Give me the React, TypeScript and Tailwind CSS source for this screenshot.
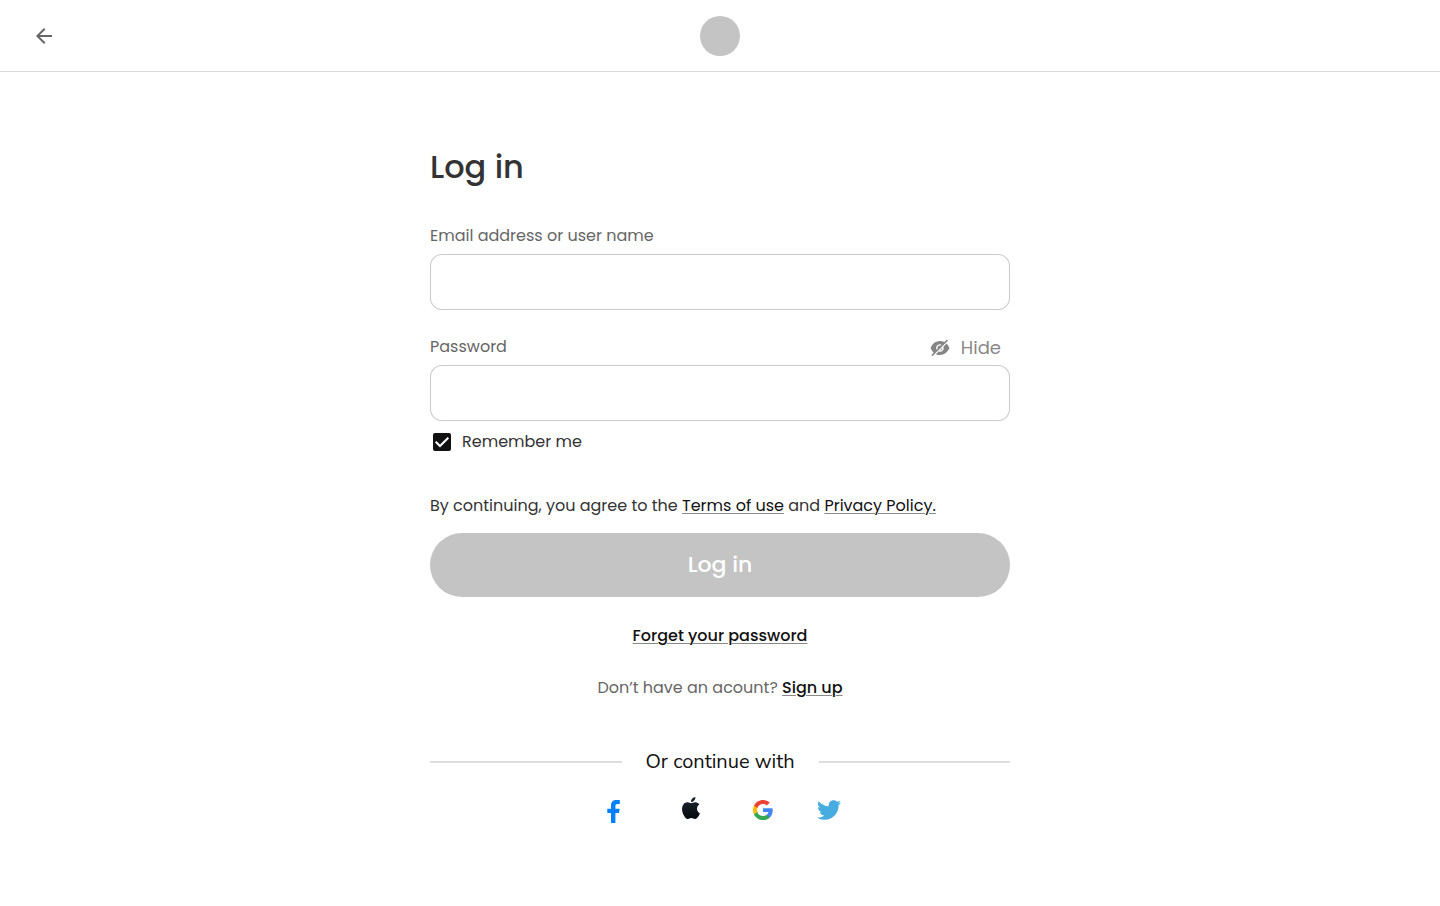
import { useState } from "react";
import { AiFillEyeInvisible } from "react-icons/ai";
import { FaTwitter } from "react-icons/fa";
import { MdArrowBack } from "react-icons/md";

const inputStyle =
  "h-14 w-full rounded-xl border border-[#666666]/35 bg-white px-4 text-[#333333] outline-none focus:border-[#111111]";
const linkStyle =
  "text-[#111111] underline decoration-[#8a8a8a] decoration-1 underline-offset-2";

const FacebookIcon = () => (
  <svg width="13" height="23" viewBox="0 0 13 23" fill="#0080FF">
    <path d="M4 23V13H0.3V8.8H4V5.6C4 2 5.9 0 9.6 0H12.8V4.1H10.5C9 4.1 8.4 4.8 8.4 6.1V8.8H12.7L12 13H8.4V23Z" />
  </svg>
);

const AppleIcon = () => (
  <svg width="22" height="22" viewBox="0 0 24 24">
    <defs>
      <linearGradient id="apple" x1="0" y1="0" x2="0" y2="1">
        <stop offset="0" stopColor="#1c2733" />
        <stop offset="1" stopColor="#080a0d" />
      </linearGradient>
    </defs>
    <path
      fill="url(#apple)"
      d="M12.152 6.896c-.948 0-2.415-1.078-3.96-1.04-2.04.027-3.91 1.183-4.961 3.014-2.117 3.675-.546 9.103 1.519 12.09 1.013 1.454 2.208 3.09 3.792 3.039 1.52-.065 2.09-.987 3.935-.987 1.831 0 2.35.987 3.96.948 1.637-.026 2.676-1.48 3.676-2.948 1.156-1.688 1.636-3.325 1.662-3.415-.039-.013-3.182-1.221-3.22-4.857-.026-3.04 2.48-4.494 2.597-4.559-1.429-2.09-3.623-2.324-4.39-2.376-2-.156-3.675 1.09-4.61 1.09zM15.53 3.83c.843-1.012 1.4-2.427 1.245-3.83-1.207.052-2.662.805-3.532 1.818-.78.896-1.454 2.338-1.273 3.714 1.338.104 2.715-.688 3.559-1.701"
    />
  </svg>
);

const GoogleIcon = () => (
  <svg width="22" height="22" viewBox="0 0 24 24">
    <path
      fill="#4285F4"
      d="M22.56 12.25c0-.78-.07-1.53-.2-2.25H12v4.26h5.92c-.26 1.37-1.04 2.53-2.21 3.31v2.77h3.57c2.08-1.92 3.28-4.74 3.28-8.09z"
    />
    <path
      fill="#34A853"
      d="M12 23c2.97 0 5.46-.98 7.28-2.66l-3.57-2.77c-.98.66-2.23 1.06-3.71 1.06-2.86 0-5.29-1.93-6.16-4.53H2.18v2.84C3.99 20.53 7.7 23 12 23z"
    />
    <path
      fill="#FBBC05"
      d="M5.84 14.09c-.22-.66-.35-1.36-.35-2.09s.13-1.43.35-2.09V7.07H2.18C1.43 8.55 1 10.22 1 12s.43 3.45 1.18 4.93l3.66-2.84z"
    />
    <path
      fill="#EA4335"
      d="M12 5.38c1.62 0 3.06.56 4.21 1.64l3.15-3.15C17.45 2.09 14.97 1 12 1 7.7 1 3.99 3.47 2.18 7.07l3.66 2.84c.87-2.6 3.3-4.53 6.16-4.53z"
    />
  </svg>
);

const App = () => {
  const [hidden, setHidden] = useState(true);

  return (
    <div className="min-h-screen bg-white font-['Poppins','Inter',sans-serif] text-base text-[#333333]">
      <header className="grid h-18 grid-cols-3 items-center border-b border-[#d9d9d9] px-8">
        <button type="button" aria-label="Go back" className="w-6 text-[#666666]">
          <MdArrowBack size={24} />
        </button>
        <div className="size-10 justify-self-center rounded-full bg-[#c4c4c4]" />
      </header>

      <main className="mx-auto max-w-[580px] pt-[71px] pb-16">
        <h1 className="text-[32px] leading-12 font-medium">Log in</h1>

        <form className="mt-8" onSubmit={(e) => e.preventDefault()}>
          <label htmlFor="email" className="block pt-px pb-1.5 text-[#666666]">
            Email address or user name
          </label>
          <input id="email" type="text" className={inputStyle} />

          <div className="mt-6 flex h-[31px] items-start justify-between pr-[9px]">
            <label htmlFor="password" className="pt-px text-[#666666]">
              Password
            </label>
            <button
              type="button"
              onClick={() => setHidden(!hidden)}
              className="flex items-center gap-2.5 text-lg text-[#666666]/80"
            >
              <AiFillEyeInvisible size={22} />
              Hide
            </button>
          </div>
          <input
            id="password"
            type={hidden ? "password" : "text"}
            className={inputStyle}
          />

          <label className="mt-2 flex items-center gap-2">
            <span className="grid size-6 place-items-center">
              <input
                type="checkbox"
                defaultChecked
                className="peer col-start-1 row-start-1 size-[18px] appearance-none rounded-xs border-2 border-[#111111] checked:bg-[#111111]"
              />
              <svg
                viewBox="0 0 18 18"
                className="pointer-events-none invisible col-start-1 row-start-1 size-[18px] peer-checked:visible"
                fill="none"
                stroke="white"
                strokeWidth="2"
              >
                <path d="M2.7 8.7L7 13L15.3 4.7" />
              </svg>
            </span>
            <span className="pt-px">Remember me</span>
          </label>

          <p className="mt-10">
            By continuing, you agree to the{" "}
            <a href="#terms" className={linkStyle}>
              Terms of use
            </a>{" "}
            and{" "}
            <a href="#privacy" className={linkStyle}>
              Privacy Policy.
            </a>
          </p>
          <button
            type="submit"
            className="mt-[15px] h-16 w-full rounded-full bg-[#c4c4c4] pb-0.5 text-[22px] font-medium text-white"
          >
            Log in
          </button>
        </form>

        <div className="mt-[27px] flex flex-col items-center gap-7">
          <a href="#forgot" className={`${linkStyle} font-medium`}>
            Forget your password
          </a>
          <p className="text-[#666666]">
            Don’t have an acount?{" "}
            <a href="#signup" className={`${linkStyle} font-medium`}>
              Sign up
            </a>
          </p>
        </div>

        <div className="mt-12 flex items-center gap-6 font-['Avenir','Nunito_Sans','Lato',sans-serif] text-xl text-[#111111] [font-variant-ligatures:none]">
          <span className="h-0.5 flex-1 bg-[#dddddd]" />
          Or continue with
          <span className="h-0.5 flex-1 bg-[#dddddd]" />
        </div>

        <div className="mt-5 flex items-center justify-center gap-12 pl-2">
          <a href="#facebook" aria-label="Facebook" className="w-6 pt-1">
            <FacebookIcon />
          </a>
          <a href="#apple" aria-label="Apple" className="flex w-6 justify-center pb-1">
            <AppleIcon />
          </a>
          <a href="#google" aria-label="Google" className="flex w-6 justify-center">
            <GoogleIcon />
          </a>
          <a href="#twitter" aria-label="Twitter" className="-ml-1.5 text-[#47acdf]">
            <FaTwitter size={24} />
          </a>
        </div>
      </main>
    </div>
  );
};

export default App;
